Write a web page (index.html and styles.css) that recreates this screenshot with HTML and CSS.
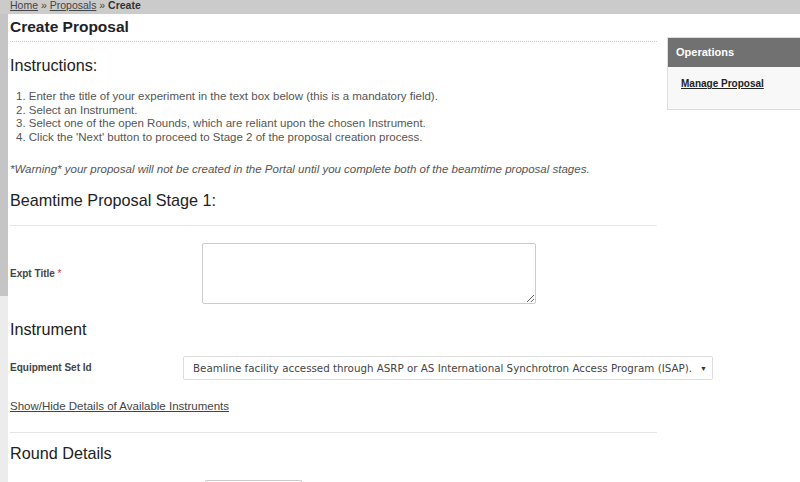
FILE: index.html
```html
<!DOCTYPE html>
<html>
<head>
<meta charset="utf-8">
<link rel="stylesheet" href="styles.css">
</head>
<body>
<div class="topbar"><a href="#">Home</a> » <a href="#">Proposals</a> » <b>Create</b></div>
<div class="layout">
  <div class="rail"></div>
  <div class="main">
    <h1 class="title">Create Proposal</h1>
    <h2 class="heading first">Instructions:</h2>
    <ol class="steps">
      <li>Enter the title of your experiment in the text box below (this is a mandatory field).</li>
      <li>Select an Instrument.</li>
      <li>Select one of the open Rounds, which are reliant upon the chosen Instrument.</li>
      <li>Click the 'Next' button to proceed to Stage 2 of the proposal creation process.</li>
    </ol>
    <p class="warning">*Warning* your proposal will not be created in the Portal until you complete both of the beamtime proposal stages.</p>
    <h2 class="heading stage">Beamtime Proposal Stage 1:</h2>
    <div class="rule"></div>
    <div class="row row-title">
      <label class="label wide">Expt Title <span class="req">*</span></label>
      <textarea class="textbox"></textarea>
    </div>
    <h2 class="heading">Instrument</h2>
    <div class="row row-select">
      <label class="label narrow">Equipment Set Id</label>
      <div class="select-wrap">
        <select class="select">
          <option>Beamline facility accessed through ASRP or AS International Synchrotron Access Program (ISAP).</option>
        </select>
        <span class="arrow">▼</span>
      </div>
    </div>
    <a href="#" class="toggle">Show/Hide Details of Available Instruments</a>
    <div class="rule rule2"></div>
    <h2 class="heading round">Round Details</h2>
    <div class="row row-round">
      <div class="label wide2"></div>
      <div class="stub"></div>
    </div>
  </div>
  <aside class="sidebar">
    <div class="side-head">Operations</div>
    <div class="side-body"><a href="#">Manage Proposal</a></div>
  </aside>
</div>
</body>
</html>
```

FILE: styles.css
```css
html, body {
  margin: 0;
  padding: 0;
  background: #fff;
  font-family: "Liberation Sans", Arial, sans-serif;
  color: #333;
  overflow: hidden;
  height: 482px;
}

.topbar {
  height: 14px;
  background: #cbcbcb;
  padding-left: 10px;
  font-size: 10.5px;
  line-height: 11px;
  color: #444;
}
.topbar a { color: #444; text-decoration: underline; }
.topbar b { color: #333; }

.layout {
  display: flex;
  height: 468px;
}

.rail {
  width: 8px;
  flex: none;
  background: linear-gradient(#c5c5c5 0, #c5c5c5 282px, #ececec 282px);
}

.main {
  width: 647px;
  flex: none;
  padding-left: 2px;
}

.title {
  margin: 3px 0 0;
  font-size: 15.5px;
  line-height: 20px;
  font-weight: bold;
  color: #222;
  padding-bottom: 4px;
  border-bottom: 1px dotted #cfcfcf;
}

.heading {
  margin: 15px 0 0;
  font-size: 16.2px;
  line-height: 20px;
  font-weight: normal;
  color: #222;
}
.heading.first { margin-top: 13px; }
.heading.stage { margin-top: 14px; }
.heading.round { margin-top: 10px; }

.steps {
  margin: 15px 0 0;
  padding-left: 6px;
  list-style-position: inside;
  font-size: 11.5px;
  line-height: 13.7px;
  color: #555;
}

.warning {
  margin: 17px 0 0;
  font-size: 11.5px;
  line-height: 14px;
  font-style: italic;
  color: #555;
}

.rule {
  margin-top: 15px;
  height: 1px;
  background: #e6e6e6;
}
.rule2 { margin-top: 19px; }

.row {
  display: flex;
  align-items: center;
}
.row-title { margin-top: 17px; }
.row-select { margin-top: 17px; }
.row-round { margin-top: 17px; }

.label {
  flex: none;
  font-size: 10px;
  font-weight: bold;
  color: #444;
}
.label.wide { width: 192px; }
.label.narrow { width: 173px; }
.label.wide2 { width: 195px; }
.req { color: #c33; font-weight: normal; }

.textbox {
  flex: none;
  width: 334px;
  height: 61px;
  box-sizing: border-box;
  border: 1px solid #ccc;
  border-radius: 2px;
  margin: 0;
  padding: 2px;
  background: #fff;
}

.select-wrap {
  position: relative;
  flex: none;
  width: 530px;
  height: 24px;
}
.select {
  appearance: none;
  -webkit-appearance: none;
  width: 100%;
  height: 24px;
  box-sizing: border-box;
  border: 1px solid #ddd;
  border-radius: 2px;
  background: #fff;
  margin: 0;
  padding: 0 0 0 9px;
  font-family: "DejaVu Sans", Verdana, sans-serif;
  font-size: 10.3px;
  color: #444;
}
.arrow {
  position: absolute;
  right: 6px;
  top: 9px;
  font-size: 7px;
  line-height: 7px;
  color: #333;
}

.toggle {
  display: block;
  margin-top: 19px;
  font-size: 11.5px;
  line-height: 14px;
  color: #444;
  text-decoration: underline;
  width: max-content;
}

.stub {
  width: 95px;
  height: 10px;
  border: 1px solid #ccc;
  border-bottom: none;
  border-radius: 2px 2px 0 0;
}

.sidebar {
  width: 133px;
  flex: none;
  margin-left: 10px;
  margin-top: 23px;
  align-self: flex-start;
  border: 1px solid #ddd;
  border-right: none;
  box-sizing: border-box;
}
.side-head {
  height: 29px;
  background: #717171;
  color: #fff;
  font-weight: bold;
  font-size: 11px;
  line-height: 29px;
  padding-left: 8px;
}
.side-body {
  height: 42px;
  background: #f8f8f8;
  padding: 8px 0 0 13px;
  box-sizing: border-box;
  line-height: 14px;
}
.side-body a {
  font-size: 10px;
  font-weight: bold;
  color: #222;
  text-decoration: underline;
}
```
